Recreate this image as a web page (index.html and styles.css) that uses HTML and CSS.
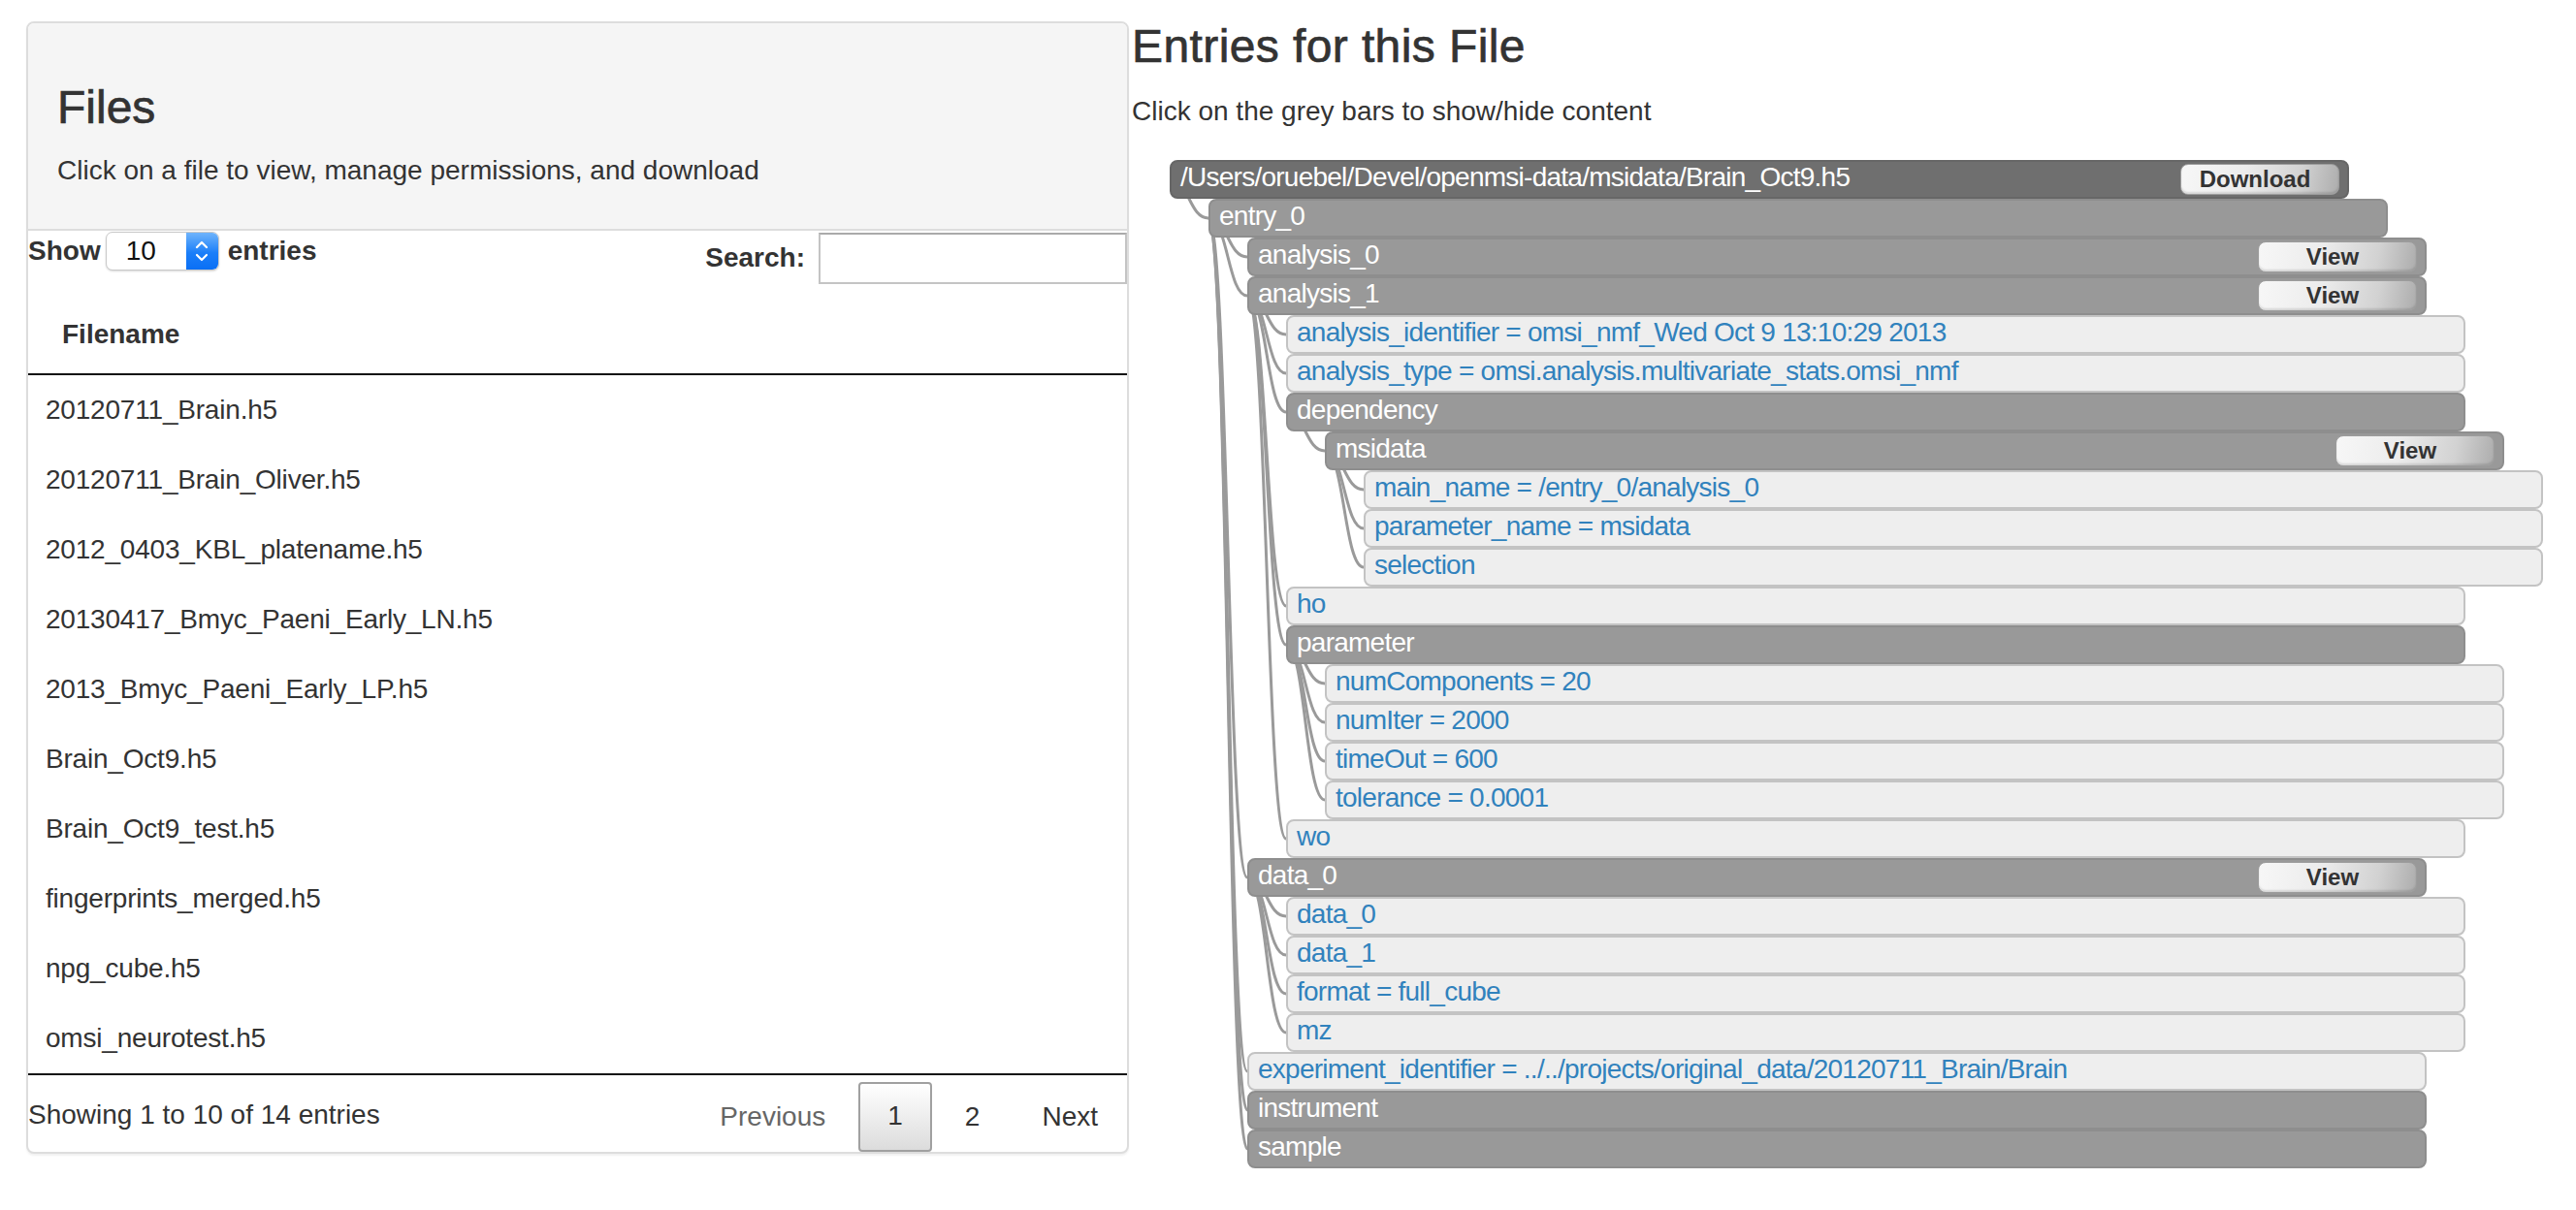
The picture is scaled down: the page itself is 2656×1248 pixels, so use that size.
FILE: index.html
```
<!DOCTYPE html>
<html>
<head>
<meta charset="utf-8">
<link rel="stylesheet" href="styles.css">
</head>
<body>
<div class="page">
  <div class="panel">
    <div class="panel-heading">
      <h3 class="title">Files</h3>
      <p class="desc">Click on a file to view, manage permissions, and download</p>
    </div>
    <div class="dt-top">
      <div class="dt-length">
        <span class="lbl-bold">Show</span>
        <span class="select">
          <span class="select-val">10</span>
          <span class="select-arrow">
            <svg width="14" height="26" viewBox="0 0 14 26"><polyline points="2,9 7,4 12,9" fill="none" stroke="#fff" stroke-width="2.2" stroke-linecap="round" stroke-linejoin="round"/><polyline points="2,17 7,22 12,17" fill="none" stroke="#fff" stroke-width="2.2" stroke-linecap="round" stroke-linejoin="round"/></svg>
          </span>
        </span>
        <span class="lbl-bold">entries</span>
      </div>
      <div class="dt-filter">
        <span class="lbl-bold">Search:</span>
        <span class="search-input"></span>
      </div>
    </div>
    <table class="dt">
      <thead><tr><th>Filename</th></tr></thead>
      <tbody>
        <tr><td>20120711_Brain.h5</td></tr>
        <tr><td>20120711_Brain_Oliver.h5</td></tr>
        <tr><td>2012_0403_KBL_platename.h5</td></tr>
        <tr><td>20130417_Bmyc_Paeni_Early_LN.h5</td></tr>
        <tr><td>2013_Bmyc_Paeni_Early_LP.h5</td></tr>
        <tr><td>Brain_Oct9.h5</td></tr>
        <tr><td>Brain_Oct9_test.h5</td></tr>
        <tr><td>fingerprints_merged.h5</td></tr>
        <tr><td>npg_cube.h5</td></tr>
        <tr><td>omsi_neurotest.h5</td></tr>
      </tbody>
    </table>
    <div class="dt-bottom">
      <div class="dt-info">Showing 1 to 10 of 14 entries</div>
      <div class="dt-paginate">
        <span class="pg disabled">Previous</span>
        <span class="pg current">1</span>
        <span class="pg">2</span>
        <span class="pg">Next</span>
      </div>
    </div>
  </div>

  <div class="entries">
    <h3 class="title">Entries for this File</h3>
    <p class="hint">Click on the grey bars to show/hide content</p>
    <div class="tree">
      <svg class="links" width="300" height="1040" viewBox="0 0 300 1040">
        <g fill="none" stroke="#9a9a9a" stroke-width="3">
          <path d="M0,20 C20,20 20,60 40,60"/>
          <path d="M40,60 C60,60 60,100 80,100"/>
          <path d="M40,60 C60,60 60,140 80,140"/>
          <path d="M80,140 C100,140 100,180 120,180"/>
          <path d="M80,140 C100,140 100,220 120,220"/>
          <path d="M80,140 C100,140 100,260 120,260"/>
          <path d="M120,260 C140,260 140,300 160,300"/>
          <path d="M160,300 C180,300 180,340 200,340"/>
          <path d="M160,300 C180,300 180,380 200,380"/>
          <path d="M160,300 C180,300 180,420 200,420"/>
          <path d="M80,140 C100,140 100,460 120,460"/>
          <path d="M80,140 C100,140 100,500 120,500"/>
          <path d="M120,500 C140,500 140,540 160,540"/>
          <path d="M120,500 C140,500 140,580 160,580"/>
          <path d="M120,500 C140,500 140,620 160,620"/>
          <path d="M120,500 C140,500 140,660 160,660"/>
          <path d="M80,140 C100,140 100,700 120,700"/>
          <path d="M40,60 C60,60 60,740 80,740"/>
          <path d="M80,740 C100,740 100,780 120,780"/>
          <path d="M80,740 C100,740 100,820 120,820"/>
          <path d="M80,740 C100,740 100,860 120,860"/>
          <path d="M80,740 C100,740 100,900 120,900"/>
          <path d="M40,60 C60,60 60,940 80,940"/>
          <path d="M40,60 C60,60 60,980 80,980"/>
          <path d="M40,60 C60,60 60,1020 80,1020"/>
        </g>
      </svg>
      <div class="node root d0"><span class="lbl">/Users/oruebel/Devel/openmsi-data/msidata/Brain_Oct9.h5</span><span class="btn">Download</span></div>
      <div class="node grp d1"><span class="lbl">entry_0</span></div>
      <div class="node grp d2"><span class="lbl">analysis_0</span><span class="btn">View</span></div>
      <div class="node grp d2"><span class="lbl">analysis_1</span><span class="btn">View</span></div>
      <div class="node leaf d3"><span class="lbl">analysis_identifier = omsi_nmf_Wed Oct 9 13:10:29 2013</span></div>
      <div class="node leaf d3"><span class="lbl">analysis_type = omsi.analysis.multivariate_stats.omsi_nmf</span></div>
      <div class="node grp d3"><span class="lbl">dependency</span></div>
      <div class="node grp d4"><span class="lbl">msidata</span><span class="btn">View</span></div>
      <div class="node leaf d5"><span class="lbl">main_name = /entry_0/analysis_0</span></div>
      <div class="node leaf d5"><span class="lbl">parameter_name = msidata</span></div>
      <div class="node leaf d5"><span class="lbl">selection</span></div>
      <div class="node leaf d3"><span class="lbl">ho</span></div>
      <div class="node grp d3"><span class="lbl">parameter</span></div>
      <div class="node leaf d4"><span class="lbl">numComponents = 20</span></div>
      <div class="node leaf d4"><span class="lbl">numIter = 2000</span></div>
      <div class="node leaf d4"><span class="lbl">timeOut = 600</span></div>
      <div class="node leaf d4"><span class="lbl">tolerance = 0.0001</span></div>
      <div class="node leaf d3"><span class="lbl">wo</span></div>
      <div class="node grp d2"><span class="lbl">data_0</span><span class="btn">View</span></div>
      <div class="node leaf d3"><span class="lbl">data_0</span></div>
      <div class="node leaf d3"><span class="lbl">data_1</span></div>
      <div class="node leaf d3"><span class="lbl">format = full_cube</span></div>
      <div class="node leaf d3"><span class="lbl">mz</span></div>
      <div class="node leaf d2"><span class="lbl">experiment_identifier = ../../projects/original_data/20120711_Brain/Brain</span></div>
      <div class="node grp d2"><span class="lbl">instrument</span></div>
      <div class="node grp d2"><span class="lbl">sample</span></div>
    </div>
  </div>
</div>
</body>
</html>
```

FILE: styles.css
```
html, body {
  margin: 0;
  padding: 0;
  background: #fff;
}
body {
  font-family: "Liberation Sans", Arial, Helvetica, sans-serif;
  font-size: 28px;
  line-height: 40px;
  color: #333;
}
.page {
  display: flex;
  align-items: flex-start;
  padding: 22px 0 0 27px;
  gap: 3px;
}

/* ---------- left panel ---------- */
.panel {
  width: 1137px;
  box-sizing: border-box;
  border: 2px solid #ddd;
  border-radius: 8px;
  box-shadow: 0 2px 2px rgba(0,0,0,0.06);
  background: #fff;
}
.panel-heading {
  background: #f5f5f5;
  border-bottom: 2px solid #ddd;
  border-radius: 6px 6px 0 0;
  padding: 20px 30px 20px;
}
.title {
  font-size: 48px;
  line-height: 52.8px;
  font-weight: normal;
  -webkit-text-stroke: 0.7px #333;
  color: #333;
  margin: 0;
}
.panel-heading .title {
  margin: 41px 0 18px;
}
.desc {
  margin: 0 0 20px;
}
.dt-top {
  display: flex;
  justify-content: space-between;
  align-items: flex-start;
  height: 57px;
}
.dt-length {
  display: flex;
  align-items: center;
  margin-top: 1px;
}
.lbl-bold {
  font-weight: bold;
}
.select {
  display: flex;
  width: 117px;
  height: 40px;
  box-sizing: border-box;
  margin: 0 9px 0 5px;
  border: 1px solid #c9c9c9;
  border-radius: 7px;
  background: #fff;
  box-shadow: 0 1px 2px rgba(0,0,0,0.15);
  overflow: hidden;
}
.select-val {
  flex: 1;
  color: #111;
  padding-left: 20px;
  line-height: 38px;
}
.select-arrow {
  width: 33px;
  display: flex;
  align-items: center;
  justify-content: center;
  background: linear-gradient(to bottom, #6fb4fb, #1a7ef9 55%, #0a6ff5);
}
.dt-filter {
  display: flex;
  align-items: center;
  margin-top: 2px;
}
.search-input {
  display: block;
  width: 318px;
  height: 53px;
  box-sizing: border-box;
  margin-left: 14px;
  border: 2px solid #c4c4c4;
  border-top-color: #aaa;
  background: #fff;
}
.dt {
  width: 100%;
  border-collapse: collapse;
  margin-top: 10px;
  border-bottom: 2px solid #111;
}
.dt th {
  text-align: left;
  font-weight: bold;
  padding: 20px 35px;
  border-bottom: 2px solid #111;
}
.dt td {
  padding: 16px 18px;
  letter-spacing: -0.2px;
}
.dt-bottom {
  display: flex;
  justify-content: space-between;
  align-items: flex-start;
}
.dt-info {
  padding-top: 21px;
}
.dt-paginate {
  display: flex;
  padding-top: 7px;
}
.pg {
  display: block;
  padding: 14px 28px;
  border: 2px solid transparent;
  border-radius: 4px;
  margin-left: 4px;
  color: #333;
}
.pg.disabled {
  color: #666;
}
.pg.current {
  border-color: #a0a0a0;
  background: linear-gradient(to bottom, #fff 0%, #dcdcdc 100%);
  padding-top: 13px;
  padding-bottom: 13px;
}

/* ---------- right side ---------- */
.entries {
  flex: 1;
}
.entries .title {
  margin: 0 0 20px;
  letter-spacing: 0.4px;
}
.hint {
  margin: 0;
}
.tree {
  position: relative;
  margin: 30px 0 0 39px;
}
.links {
  position: absolute;
  left: 0;
  top: 0;
  z-index: 0;
  overflow: visible;
}
.node {
  position: relative;
  z-index: 1;
  width: 1216px;
  height: 40px;
  box-sizing: border-box;
  border: 2px solid;
  border-radius: 8px;
  display: flex;
  align-items: center;
  justify-content: space-between;
  padding-left: 9px;
  white-space: nowrap;
}
.lbl {
  line-height: 32px;
  margin-bottom: 4px;
  letter-spacing: -0.75px;
}
.root {
  background: #6f6f6f;
  border-color: #666;
  color: #fff;
}
.grp {
  background: #999;
  border-color: #8e8e8e;
  color: #fff;
}
.leaf {
  background: #eee;
  border-color: #c3c3c3;
  color: #3182bd;
}
.d0 { margin-left: 0; }
.d1 { margin-left: 40px; }
.d2 { margin-left: 80px; }
.d3 { margin-left: 120px; }
.d4 { margin-left: 160px; }
.d5 { margin-left: 200px; }
.btn {
  width: 164px;
  height: 32px;
  box-sizing: border-box;
  margin-right: 8px;
  border: 1px solid #9c9c9c;
  border-radius: 8px;
  background: linear-gradient(100deg, #f7f7f7 0%, #ececec 40%, #d2d2d2 75%, #adadad 100%);
  box-shadow: inset 0 -2px 2px rgba(0,0,0,0.12);
  color: #333;
  font-weight: bold;
  font-size: 24px;
  line-height: 30px;
  text-align: center;
  padding-right: 10px;
}
```
